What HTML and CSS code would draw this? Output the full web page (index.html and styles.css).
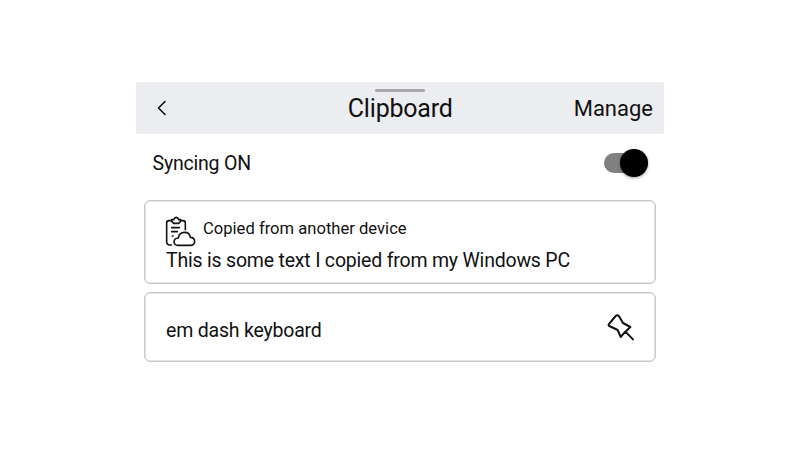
FILE: index.html
```html
<!DOCTYPE html>
<html lang="en">
<head>
<meta charset="utf-8">
<title>Clipboard</title>
<link rel="stylesheet" href="styles.css">
</head>
<body>
<main class="panel">
  <header class="header">
    <span class="handle"></span>
    <svg class="back" viewBox="0 0 12 16"><path d="M9 1.5 2.5 8 9 14.5"/></svg>
    <h1 class="title">Clipboard</h1>
    <span class="manage">Manage</span>
  </header>
  <div class="sync">
    <span class="sync-label">Syncing ON</span>
    <span class="switch"><span class="knob"></span></span>
  </div>
  <section class="card card-remote">
    <div class="source">
      <svg class="clip-icon" viewBox="30 18 93 93">
        <path d="M48 32H42Q35 32 35 39V96Q35 103 43 105H49M79 32H84Q91 32 91 39V59"/>
        <path d="M50 29 56 29Q58 22 63.500 22Q69 22 71 29L77 29V34L71 40H56L50 34Z"/>
        <path d="M50 53H73M50 65H67M52 78H54"/>
        <path d="M69 106C53 106 53 85 70 84C73 62 103 62 106 82C123 82 123 106 108 106Z"/>
      </svg>
      <span class="source-label">Copied from another device</span>
    </div>
    <p class="clip-text">This is some text I copied from my Windows PC</p>
  </section>
  <section class="card card-local">
    <p class="local-text">em dash keyboard</p>
    <svg class="pin" viewBox="21 24 84 84"><path d="M27 57 48 32Q53 28 57 34L69 54 91 66 76 80 62 96 53 75 28 63Q24 61 27 57ZM76 80 99 103"/></svg>
  </section>
</main>
</body>
</html>
```
FILE: styles.css
```css
* { box-sizing: border-box; }
body { margin: 0; background: #fff; color: #111; font-family: Roboto, sans-serif; }
svg { display: block; fill: none; stroke: #111; stroke-linecap: round; stroke-linejoin: round; }
h1, p { margin: 0; font-weight: 400; }
.panel { width: 528px; margin: 82px auto 0; white-space: nowrap; }
.header {
  position: relative;
  display: grid;
  grid-template-columns: 1fr auto 1fr;
  align-items: center;
  height: 52px;
  padding: 2px 11px 0 19.500px;
  background: #ecedf1;
}
.handle { position: absolute; left: 239px; top: 6.500px; width: 50px; height: 3px; border-radius: 2px; background: #a8a8ab; }
.back { width: 12px; height: 16px; margin-top: -3px; stroke-width: 1.600; }
.title { font-size: 25px; line-height: 32px; margin-left: -8px; letter-spacing: -.2px; }
.manage { justify-self: end; font-size: 22px; line-height: 30px; }
.sync { display: flex; align-items: center; justify-content: space-between; height: 58px; padding: 0 16px 0 16.500px; }
.sync-label { font-size: 19.500px; letter-spacing: -.2px; }
.switch { display: flex; align-items: center; justify-content: flex-end; width: 44px; height: 20px; margin-top: -1px; border-radius: 10px; background: #808080; }
.knob { width: 28px; height: 28px; flex: none; border-radius: 50%; background: #000; box-shadow: 0 1px 3px rgba(0, 0, 0, .4); }
.card { margin: 8px 8px 0; border: 1px solid #c9c9c9; border-radius: 6px; box-shadow: inset 0 0 0 .5px #c9c9c9; }
.card-remote { height: 84px; padding: 15px 20px 0; }
.source { display: flex; align-items: center; gap: 7px; height: 31px; }
.clip-icon { width: 31px; height: 31px; stroke-width: 4.800; }
.source-label { font-size: 16.600px; margin-top: -6px; }
.clip-text { font-size: 19.500px; letter-spacing: -.2px; line-height: 26px; padding: 1px 0 0 1px; }
.card-local { display: flex; align-items: center; justify-content: space-between; height: 70px; padding: 2px 20px 0 21px; }
.local-text { font-size: 19.500px; letter-spacing: -.2px; line-height: 26px; margin-top: 5px; }
.pin { width: 28px; height: 28px; stroke-width: 6; margin-top: -3px; }
```
